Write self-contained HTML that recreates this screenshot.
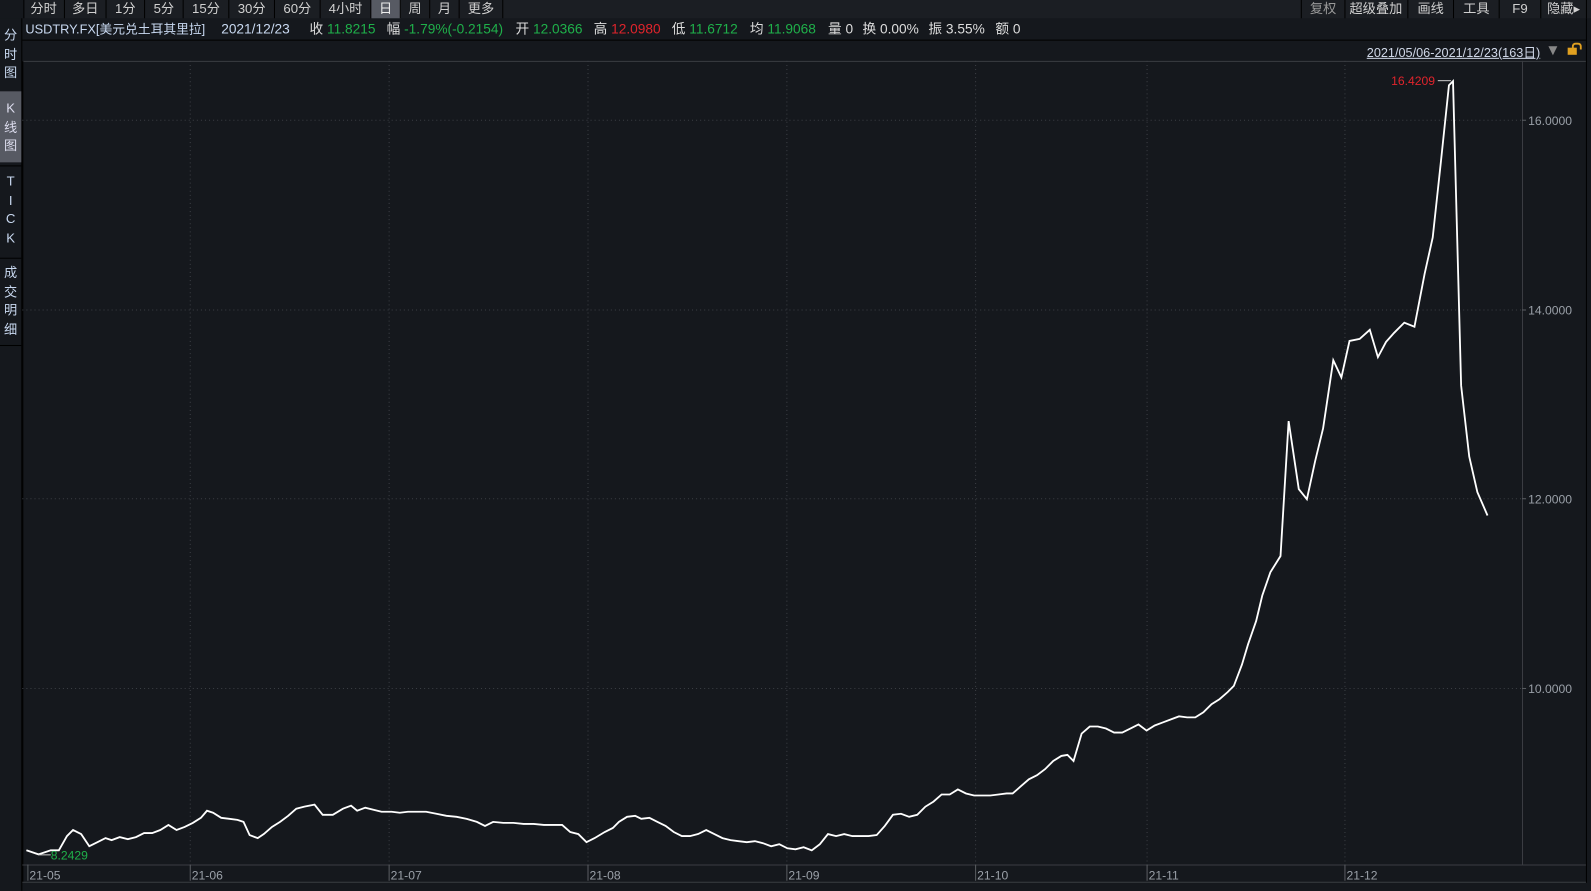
<!DOCTYPE html>
<html><head><meta charset="utf-8"><style>
html,body{margin:0;padding:0;background:#15181d;overflow:hidden;width:1591px;height:891px}
#w{position:absolute;left:0;top:0;width:1568px;height:878px;transform:scale(1.01467);transform-origin:0 0;font-family:"Liberation Sans","Noto Sans CJK SC",sans-serif;color:#c8c8c8;font-size:13px}
.tab{position:absolute;top:0;height:18px;line-height:18px;font-size:13px;color:#d0d0d0;text-align:center;border-right:1px solid #000}
.sb{position:absolute;left:0;width:21px;text-align:center;font-size:13px;color:#c8d8f0;line-height:18.5px}
.g{color:#1fb04a}.r{color:#e0242c}
.i{position:absolute;top:20px;white-space:nowrap;font-size:13.5px;line-height:18px;color:#ddd}
</style></head><body><div id="w">
<div style="position:absolute;left:0;top:0;width:1568px;height:18px;background:#1b1e23"></div>
<div style="position:absolute;left:0;top:0;width:23px;height:18px;background:#15181d;border-right:1px solid #000"></div>
<div class="tab" style="left:23px;width:40px">分时</div>
<div class="tab" style="left:64px;width:40px">多日</div>
<div class="tab" style="left:105px;width:37px">1分</div>
<div class="tab" style="left:143px;width:37px">5分</div>
<div class="tab" style="left:181px;width:44px">15分</div>
<div class="tab" style="left:226px;width:44px">30分</div>
<div class="tab" style="left:271px;width:44px">60分</div>
<div class="tab" style="left:316px;width:49px">4小时</div>
<div class="tab" style="left:366px;width:28px;background:#575a63;color:#eee">日</div>
<div class="tab" style="left:395px;width:28px">周</div>
<div class="tab" style="left:424px;width:28px">月</div>
<div class="tab" style="left:453px;width:42px">更多</div>
<div class="tab" style="left:1282px;width:42px;border-left:1px solid #000;color:#999">复权</div>
<div class="tab" style="left:1325px;width:62px">超级叠加</div>
<div class="tab" style="left:1388px;width:44px">画线</div>
<div class="tab" style="left:1433px;width:44px">工具</div>
<div class="tab" style="left:1478px;width:40px">F9</div>
<div class="tab" style="left:1519px;width:44px">隐藏▸</div>
<div class="i" style="left:25px;color:#c8d8f0;font-size:12.6px">USDTRY.FX[美元兑土耳其里拉]</div>
<div class="i" style="left:218px;color:#c8d8f0">2021/12/23</div>
<div class="i" style="left:305px">收 <span class="g">11.8215</span></div>
<div class="i" style="left:381px">幅 <span class="g">-1.79%(-0.2154)</span></div>
<div class="i" style="left:508px">开 <span class="g">12.0366</span></div>
<div class="i" style="left:585px">高 <span class="r">12.0980</span></div>
<div class="i" style="left:662px">低 <span class="g">11.6712</span></div>
<div class="i" style="left:739px">均 <span class="g">11.9068</span></div>
<div class="i" style="left:816px">量 0</div>
<div class="i" style="left:850px">换 0.00%</div>
<div class="i" style="left:915px">振 3.55%</div>
<div class="i" style="left:981px">额 0</div>
<div style="position:absolute;left:0;top:18px;width:21px;height:860px;background:#15181d;border-right:1px solid #000"></div>
<div class="sb" style="top:26px">分<br>时<br>图</div>
<div class="sb" style="top:90px;height:70px;background:#575a63"></div>
<div class="sb" style="top:98px;color:#dde">K<br>线<br>图</div>
<div style="position:absolute;left:0;top:163px;width:21px;border-top:1px solid #000"></div>
<div class="sb" style="top:170px">T<br>I<br>C<br>K</div>
<div style="position:absolute;left:0;top:254px;width:21px;border-top:1px solid #000"></div>
<div class="sb" style="top:260px">成<br>交<br>明<br>细</div>
<div style="position:absolute;left:0;top:340px;width:21px;border-top:1px solid #000"></div>
<div style="position:absolute;left:1347px;top:41px;font-size:12.5px;color:#d0d8e8;text-decoration:underline">2021/05/06-2021/12/23(163日)</div>
<div style="position:absolute;left:1523px;top:41px;color:#888;font-size:15px">▼</div>
<div style="position:absolute;left:1545px;top:47px;width:9px;height:7px;background:#e0a020"></div>
<div style="position:absolute;left:1549px;top:42px;width:6px;height:5px;border:2px solid #e0a020;border-bottom:none;border-radius:4px 4px 0 0"></div>
<svg style="position:absolute;left:0;top:0" width="1568" height="878">
<line x1="22" y1="39.5" x2="1563" y2="39.5" stroke="#000"/>
<line x1="22" y1="60.5" x2="1563" y2="60.5" stroke="#3a3d42"/>
<line x1="22.5" y1="60" x2="22.5" y2="870" stroke="#000"/>
<line x1="1500.5" y1="60" x2="1500.5" y2="852" stroke="#3a3d42"/>
<line x1="1563.5" y1="18" x2="1563.5" y2="870" stroke="#000"/>
<line x1="22" y1="852.5" x2="1563" y2="852.5" stroke="#3a3d42"/>
<line x1="22" y1="869.5" x2="1563" y2="869.5" stroke="#3a3d42"/>
<g stroke="#3c3f45" stroke-dasharray="1,3">
<line x1="187.5" y1="60" x2="187.5" y2="852"/><line x1="383.5" y1="60" x2="383.5" y2="852"/><line x1="579.5" y1="60" x2="579.5" y2="852"/><line x1="775.5" y1="60" x2="775.5" y2="852"/><line x1="961.5" y1="60" x2="961.5" y2="852"/><line x1="1130.5" y1="60" x2="1130.5" y2="852"/><line x1="1325.5" y1="60" x2="1325.5" y2="852"/>
<line x1="22" y1="118.5" x2="1500" y2="118.5"/><line x1="22" y1="305.5" x2="1500" y2="305.5"/><line x1="22" y1="491.5" x2="1500" y2="491.5"/><line x1="22" y1="678.5" x2="1500" y2="678.5"/>
</g>
<g stroke="#5a5d62">
<line x1="1500" y1="118.5" x2="1504" y2="118.5"/><line x1="1500" y1="305.5" x2="1504" y2="305.5"/><line x1="1500" y1="491.5" x2="1504" y2="491.5"/><line x1="1500" y1="678.5" x2="1504" y2="678.5"/>
<line x1="27.5" y1="852" x2="27.5" y2="868"/><line x1="187.5" y1="852" x2="187.5" y2="868"/><line x1="383.5" y1="852" x2="383.5" y2="868"/><line x1="579.5" y1="852" x2="579.5" y2="868"/><line x1="775.5" y1="852" x2="775.5" y2="868"/><line x1="961.5" y1="852" x2="961.5" y2="868"/><line x1="1130.5" y1="852" x2="1130.5" y2="868"/><line x1="1325.5" y1="852" x2="1325.5" y2="868"/>
</g>
<g fill="#9aa0a8" font-size="12" font-family="Liberation Sans,sans-serif">
<text x="1506" y="123">16.0000</text><text x="1506" y="310">14.0000</text><text x="1506" y="496">12.0000</text><text x="1506" y="683">10.0000</text>
<text x="29" y="867">21-05</text><text x="189" y="867">21-06</text><text x="385" y="867">21-07</text><text x="581" y="867">21-08</text><text x="777" y="867">21-09</text><text x="963" y="867">21-10</text><text x="1132" y="867">21-11</text><text x="1327" y="867">21-12</text>
</g>
<polyline fill="none" stroke="#fff" stroke-width="1.8" points="26,838 38,842 50,838 58,838 66,824 72,818 80,822 88,834 96,830 104,826 110,828 118,825 126,827 134,825 142,821 150,821 158,818 166,813 174,818 182,815 190,811 198,806 204,799 210,801 218,806 226,807 234,808 240,810 246,823 254,826 260,822 268,815 276,810 284,804 292,797 300,795 310,793 318,803 328,803 338,797 346,794 352,799 360,796 368,798 376,800 386,800 394,801 402,800 410,800 420,800 430,802 440,804 450,805 460,807 470,810 478,814 486,810 496,811 506,811 516,812 526,812 536,813 546,813 554,813 562,820 570,822 578,830 586,826 596,820 604,816 610,810 618,805 626,804 632,807 640,806 648,810 656,814 664,820 672,824 680,824 688,822 696,818 704,822 712,826 720,828 728,829 736,830 744,829 752,831 760,834 768,832 776,836 784,837 792,835 800,838 808,832 816,822 824,824 832,822 840,824 848,824 856,824 864,823 872,814 880,803 888,802 896,805 904,803 912,795 920,790 928,783 936,783 944,778 952,782 960,784 968,784 976,784 984,783 992,782 998,782 1006,775 1014,768 1022,764 1030,758 1038,750 1046,745 1052,744 1058,750 1066,723 1074,716 1082,716 1090,718 1098,722 1106,722 1114,718 1122,714 1130,720 1138,715 1146,712 1154,709 1162,706 1170,707 1178,707 1186,702 1194,694 1202,689 1210,682 1216,676 1224,655 1230,635 1238,612 1244,587 1252,564 1262,548 1270,415 1280,482 1288,492 1296,455 1304,422 1314,355 1322,372 1330,336 1340,334 1350,325 1358,352 1366,337 1374,328 1384,318 1394,322 1404,270 1412,234 1420,160 1428,84 1432,80 1440,380 1448,450 1456,485 1466,508"/>
<line x1="1417" y1="79.5" x2="1430" y2="79.5" stroke="#ccc"/>
<text x="1371" y="84" fill="#e0242c" font-size="12" font-family="Liberation Sans,sans-serif">16.4209</text>
<line x1="38" y1="842.5" x2="50" y2="842.5" stroke="#ccc"/>
<text x="50" y="847" fill="#1fb04a" font-size="12" font-family="Liberation Sans,sans-serif">8.2429</text>
</svg>
</div></body></html>
